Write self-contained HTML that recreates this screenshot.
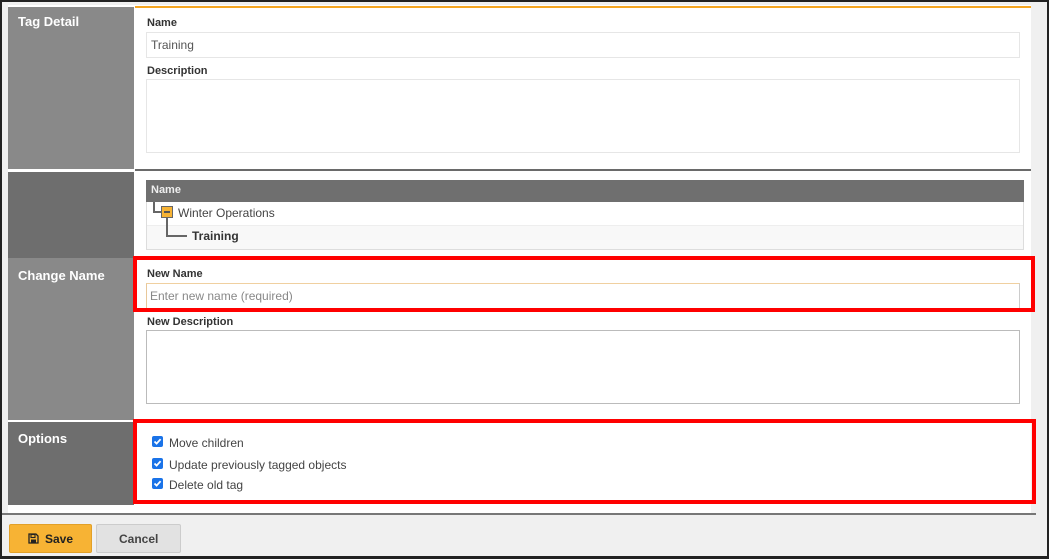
<!DOCTYPE html>
<html><head><style>
*{margin:0;padding:0;box-sizing:border-box}
body{width:1049px;height:559px;background:#f0f0f0;position:relative;overflow:hidden;font-family:"Liberation Sans",Arial,sans-serif}
.a{position:absolute}
.lbl{position:absolute;font-size:11px;font-weight:bold;color:#333}
.hd{position:absolute;left:18px;font-size:13px;font-weight:bold;color:#fff}
.inp{position:absolute;background:#fff;border:1px solid #e6e6e6}
.cb{position:absolute;left:152px;width:11px;height:11px;background:#1a73e8;border-radius:2px}
.cb svg{position:absolute;left:0;top:0}
.ct{position:absolute;left:169px;font-size:12px;color:#444}
</style></head><body>
<div class="a" style="left:0;top:0;width:1049px;height:2px;background:#222"></div>
<div class="a" style="left:0;top:0;width:2px;height:559px;background:#222"></div>
<div class="a" style="right:0;top:0;width:2px;height:559px;background:#222"></div>
<div class="a" style="left:0;bottom:0;width:1049px;height:3px;background:#222"></div>

<div class="a" style="left:8px;top:5px;width:1023px;height:508px;background:#fff"></div>
<div class="a" style="left:8px;top:7px;width:126px;height:162px;background:#898989"></div>
<div class="a" style="left:8px;top:172px;width:126px;height:86px;background:#6e6e6e"></div>
<div class="a" style="left:8px;top:258px;width:126px;height:162px;background:#898989"></div>
<div class="a" style="left:8px;top:422px;width:126px;height:83px;background:#6e6e6e"></div>
<div class="hd" style="top:14px">Tag Detail</div>
<div class="hd" style="top:268px">Change Name</div>
<div class="hd" style="top:431px">Options</div>

<div class="a" style="left:135px;top:6px;width:896px;height:2px;background:#f5a623"></div>
<div class="a" style="left:135px;top:169px;width:896px;height:2px;background:#6a6a6a"></div>

<div class="lbl" style="left:147px;top:17px">Name</div>
<div class="inp" style="left:146px;top:32px;width:874px;height:26px"><span style="position:absolute;left:4px;top:5px;font-size:12px;color:#555">Training</span></div>
<div class="lbl" style="left:147px;top:65px">Description</div>
<div class="inp" style="left:146px;top:79px;width:874px;height:74px"></div>

<div class="a" style="left:146px;top:180px;width:878px;height:70px;border:1px solid #ddd;background:#fff"></div>
<div class="a" style="left:146px;top:180px;width:878px;height:22px;background:#6f6f6f"><span style="position:absolute;left:5px;top:4px;font-size:11px;font-weight:bold;color:#eee">Name</span></div>
<div class="a" style="left:147px;top:225px;width:876px;height:24px;background:#f8f8f8;border-top:1px solid #eee"></div>
<div class="a" style="left:153px;top:202px;width:2px;height:11px;background:#666"></div>
<div class="a" style="left:153px;top:211px;width:9px;height:2px;background:#666"></div>
<div class="a" style="left:161px;top:206px;width:12px;height:12px;background:#f7b334;border:1px solid #666"><div style="position:absolute;left:2px;top:4px;width:6px;height:2px;background:#555"></div></div>
<div class="a" style="left:178px;top:206px;font-size:12px;color:#444">Winter Operations</div>
<div class="a" style="left:166px;top:218px;width:2px;height:19px;background:#666"></div>
<div class="a" style="left:166px;top:235px;width:21px;height:2px;background:#666"></div>
<div class="a" style="left:192px;top:229px;font-size:12px;font-weight:bold;color:#333">Training</div>

<div class="lbl" style="left:147px;top:268px">New Name</div>
<div class="inp" style="left:146px;top:283px;width:874px;height:26px;border:1px solid #ccc;border-left-color:#e8c89a;border-top-color:#f0d0a0"><span style="position:absolute;left:3px;top:5px;font-size:12px;color:#888">Enter new name (required)</span></div>
<div class="lbl" style="left:147px;top:316px">New Description</div>
<div class="inp" style="left:146px;top:330px;width:874px;height:74px;border:1px solid #bbb"></div>

<div class="cb" style="top:436px"><svg width="11" height="11"><path d="M2.5 5.5 L4.6 7.6 L8.6 3.2" stroke="#fff" stroke-width="1.8" fill="none"/></svg></div>
<div class="ct" style="top:436px">Move children</div>
<div class="cb" style="top:458px"><svg width="11" height="11"><path d="M2.5 5.5 L4.6 7.6 L8.6 3.2" stroke="#fff" stroke-width="1.8" fill="none"/></svg></div>
<div class="ct" style="top:458px">Update previously tagged objects</div>
<div class="cb" style="top:478px"><svg width="11" height="11"><path d="M2.5 5.5 L4.6 7.6 L8.6 3.2" stroke="#fff" stroke-width="1.8" fill="none"/></svg></div>
<div class="ct" style="top:478px">Delete old tag</div>

<div class="a" style="left:133px;top:256px;width:902px;height:56px;border:4px solid #f00"></div>
<div class="a" style="left:133px;top:419px;width:903px;height:85px;border:4px solid #f00"></div>

<div class="a" style="left:2px;top:513px;width:1034px;height:2px;background:#777"></div>

<div class="a" style="left:9px;top:524px;width:83px;height:29px;background:#f7b334;border:1px solid #e2a028;border-radius:2px">
<svg class="a" style="left:18px;top:8px" width="11" height="11" viewBox="0 0 11 11"><path d="M1 1 H8 L10 3 V10 H1 Z" fill="none" stroke="#222" stroke-width="1.3"/><rect x="3" y="1.5" width="4" height="3" fill="none" stroke="#222" stroke-width="1.1"/><rect x="3" y="6.5" width="5" height="3" fill="#222"/></svg>
<span style="position:absolute;left:35px;top:7px;font-size:12px;font-weight:bold;color:#222">Save</span></div>
<div class="a" style="left:96px;top:524px;width:85px;height:29px;background:#e2e2e2;border:1px solid #ccc;border-radius:2px"><span style="position:absolute;left:22px;top:7px;font-size:12px;font-weight:bold;color:#444">Cancel</span></div>
</body></html>
